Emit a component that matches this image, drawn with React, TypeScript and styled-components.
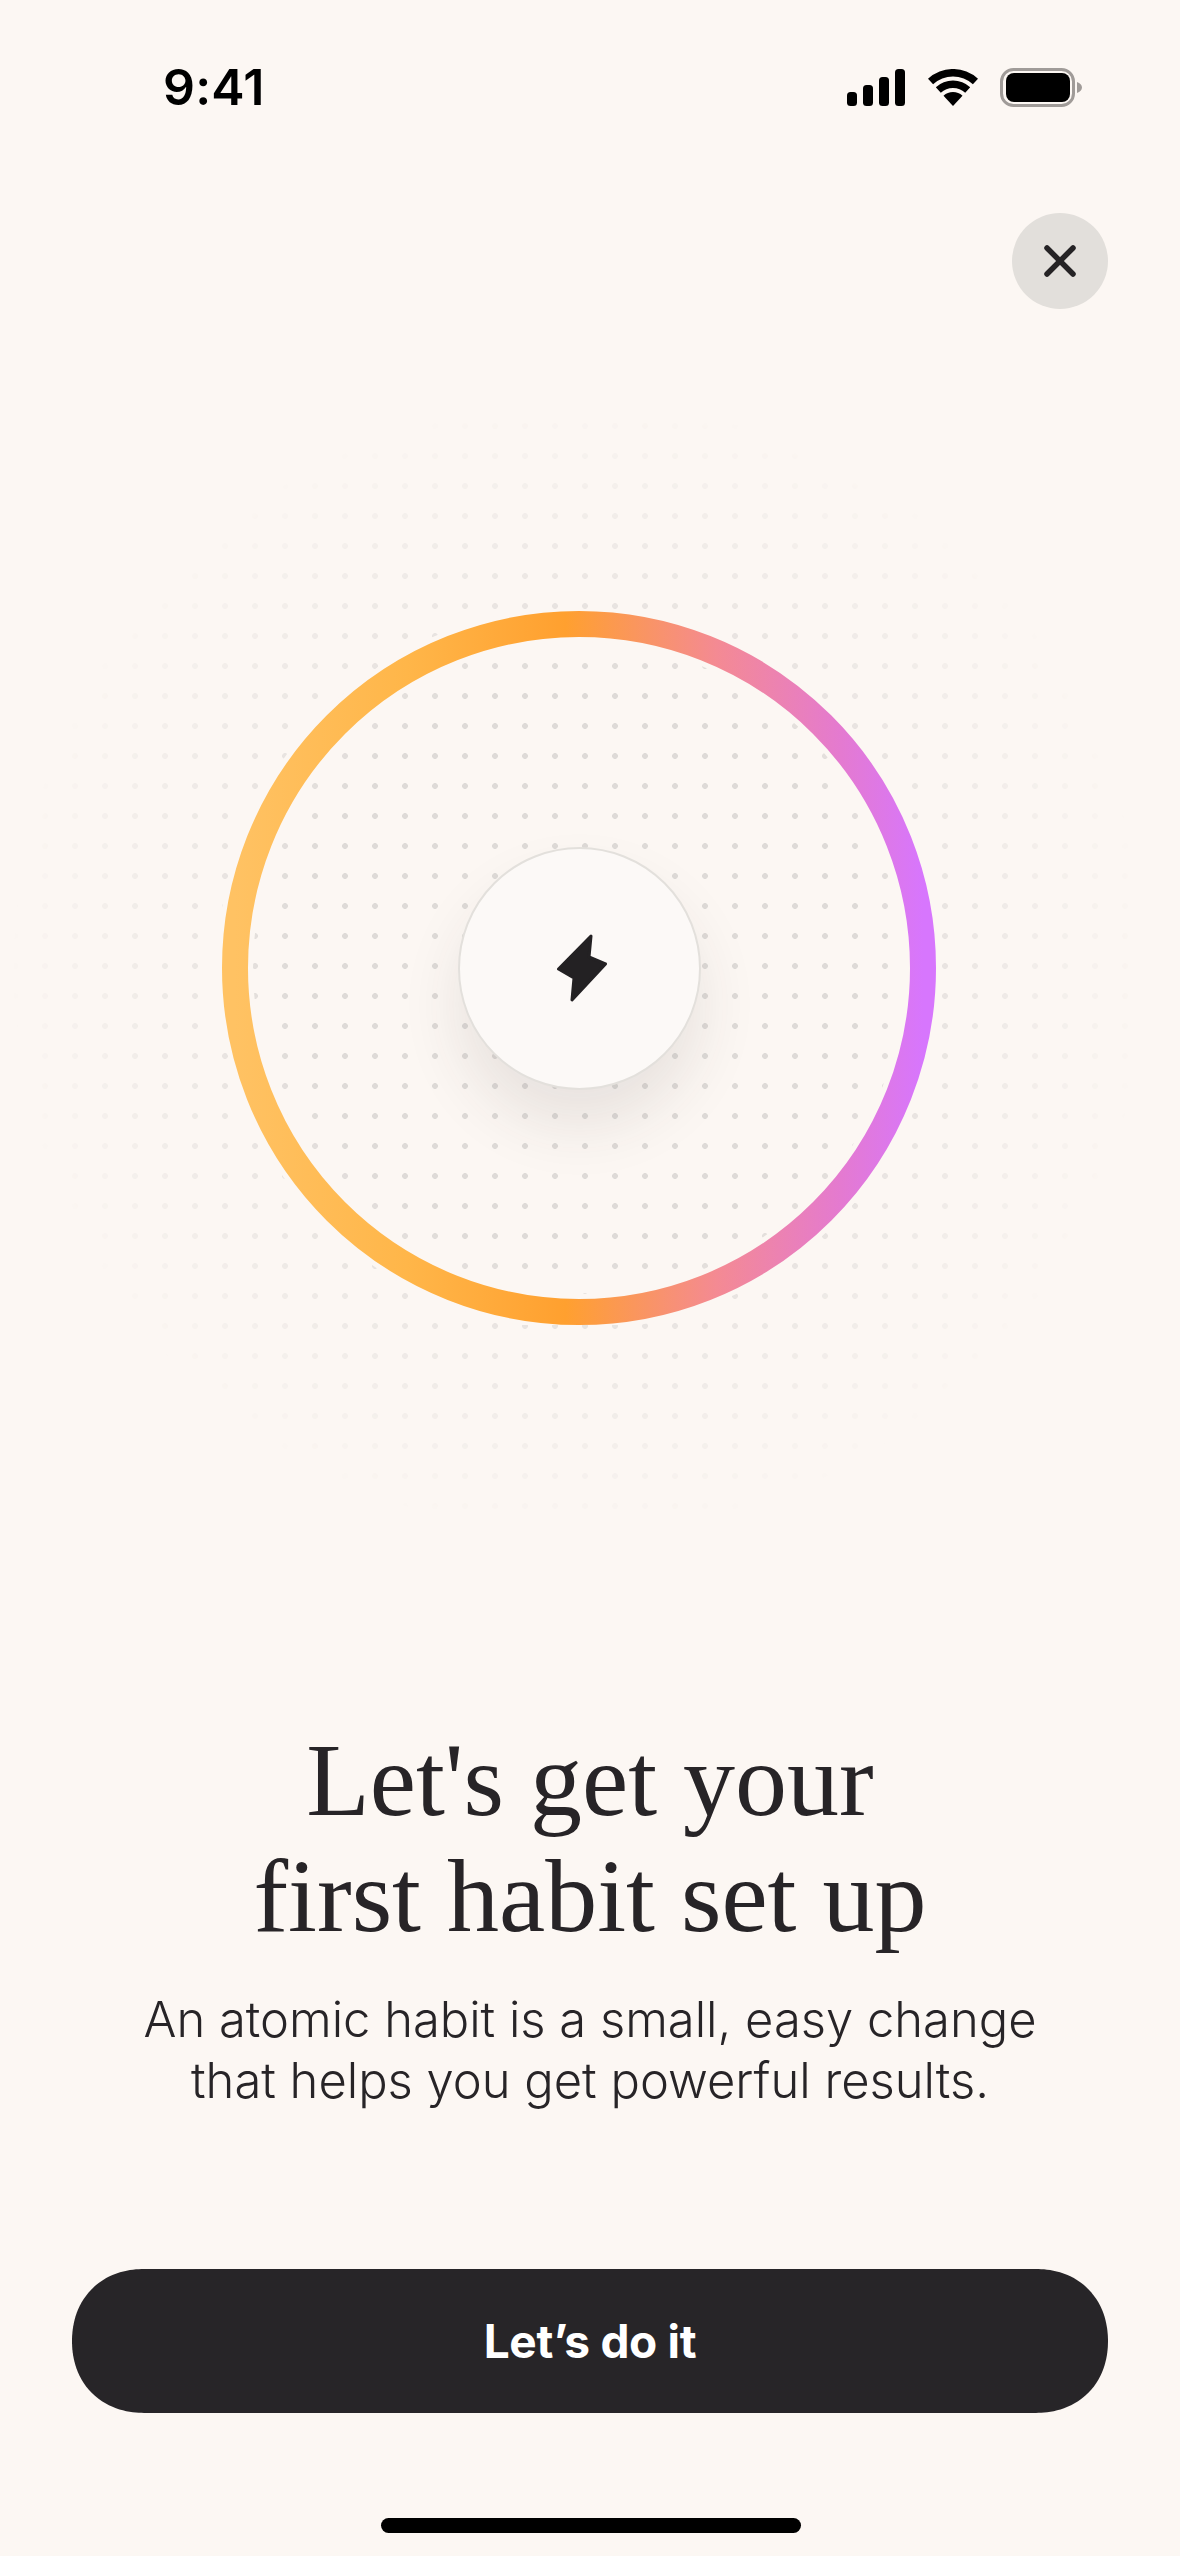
import React from "react";
import styled, { createGlobalStyle } from "styled-components";

const Global = createGlobalStyle`
  html, body { margin: 0; padding: 0; background: #fcf7f3; }
  * { box-sizing: border-box; }
`;

const Screen = styled.div`
  width: 1180px;
  height: 2556px;
  background: #fcf7f3;
  display: flex;
  flex-direction: column;
  overflow: hidden;
  font-family: Inter, "Liberation Sans", sans-serif;
  color: #272427;
`;

const StatusBar = styled.div`
  display: flex;
  justify-content: space-between;
  align-items: center;
  height: 39px;
  margin-top: 68px;
  padding: 0 98px 0 163px;
`;

const Time = styled.span`
  font-size: 50px;
  font-weight: 600;
  line-height: 39px;
  letter-spacing: 0.2px;
  color: #000;
`;

const StatusIcons = styled.div`
  display: flex;
  align-items: center;
  gap: 22.5px;
`;

const CloseRow = styled.div`
  display: flex;
  justify-content: flex-end;
  margin-top: 106px;
  padding-right: 72px;
`;

const CloseButton = styled.button`
  width: 96px;
  height: 96px;
  border: 0;
  padding: 0;
  border-radius: 50%;
  background: #e2dfdb;
  color: #252325;
  display: flex;
  align-items: center;
  justify-content: center;
`;

const Hero = styled.div`
  position: relative;
  width: 714px;
  height: 714px;
  margin: 302px 0 0 222px;
  display: flex;
  align-items: center;
  justify-content: center;
`;

const DotField = styled.div`
  position: absolute;
  left: -213px;
  top: -213px;
  width: 1140px;
  height: 1140px;
  background-image: radial-gradient(circle at center, #dedad7 2.6px, transparent 3.2px);
  background-size: 30px 30px;
  background-position: 21px 13px;
  -webkit-mask-image: radial-gradient(circle closest-side, #000 0%, #000 50%, rgba(0,0,0,.5) 70%, rgba(0,0,0,.2) 88%, transparent 100%);
  mask-image: radial-gradient(circle closest-side, #000 0%, #000 50%, rgba(0,0,0,.5) 70%, rgba(0,0,0,.2) 88%, transparent 100%);
`;

const RingArt = styled.svg`
  position: absolute;
  inset: 0;
  width: 714px;
  height: 714px;
`;

const Knob = styled.div`
  position: relative;
  width: 243px;
  height: 243px;
  border-radius: 50%;
  background: #fcf9f7;
  border: 2px solid #e3e0dc;
  box-shadow: 0 36px 60px rgba(60, 50, 45, 0.1);
  display: flex;
  align-items: center;
  justify-content: center;
`;

const Bolt = styled.svg`
  width: 50px;
  height: 68px;
  margin-left: 5px;
`;

const Copy = styled.div`
  margin-top: 397px;
  text-align: center;
`;

const Title = styled.h1`
  margin: 0;
  font-family: "Liberation Serif", serif;
  font-weight: 400;
  font-size: 104px;
  line-height: 116px;
  color: #272427;
`;

const Body = styled.p`
  margin: 35px 0 0;
  font-size: 48.9px;
  font-weight: 360;
  line-height: 61px;
  color: #272427;
`;

const Cta = styled.button`
  display: block;
  width: 1036px;
  height: 144px;
  margin: 158px 0 0 72px;
  border: 0;
  border-radius: 72px;
  corner-shape: superellipse(1.1);
  background: #272528;
  color: #fff;
  font-family: Inter, "Liberation Sans", sans-serif;
  font-size: 46px;
  font-weight: 700;
  letter-spacing: -0.3px;
`;

const HomeBar = styled.div`
  width: 420px;
  height: 15px;
  margin: 105px 0 0 381px;
  border-radius: 8px;
  background: #000;
`;

export default function App() {
  return (
    <Screen>
      <Global />
      <StatusBar>
        <Time>9:41</Time>
        <StatusIcons>
          <svg width="58" height="37" viewBox="0 0 58 37" fill="#000">
            <rect x="0" y="23" width="10" height="14" rx="3.5" />
            <rect x="16" y="16" width="10" height="21" rx="3.5" />
            <rect x="32" y="8" width="10" height="29" rx="3.5" />
            <rect x="48" y="0" width="10" height="37" rx="3.5" />
          </svg>
          <svg width="50" height="37" viewBox="0 0 50 37" fill="#000">
            <path d="M0 9.7 A37 37 0 0 1 50 9.7 L44.9 15.3 A29.5 29.5 0 0 0 5.1 15.3 Z" />
            <path d="M7.8 18.2 A25.5 25.5 0 0 1 42.2 18.2 L37.2 23.7 A18 18 0 0 0 12.8 23.7 Z" />
            <path d="M25 37 L15.5 26.7 A14 14 0 0 1 34.5 26.7 Z" />
          </svg>
          <svg width="82" height="39" viewBox="0 0 82 39" fill="none">
            <rect x="1.5" y="1.5" width="72" height="36" rx="12" stroke="#a09b98" strokeWidth="3" />
            <rect x="6" y="5" width="64" height="29" rx="8" fill="#000" />
            <path d="M77 14 C80 15 82 17 82 19.5 C82 22 80 24 77 25 Z" fill="#a09b98" />
          </svg>
        </StatusIcons>
      </StatusBar>

      <CloseRow>
        <CloseButton aria-label="Close">
          <svg width="32" height="32" viewBox="0 0 32 32" fill="none" stroke="currentColor" strokeWidth="5.5" strokeLinecap="round">
            <path d="M3 3 L29 29 M29 3 L3 29" />
          </svg>
        </CloseButton>
      </CloseRow>

      <Hero>
        <DotField />
        <RingArt viewBox="0 0 714 714">
          <defs>
            <linearGradient id="ringGrad" x1="0" y1="0" x2="1" y2="0">
              <stop offset="0" stopColor="#ffc263" />
              <stop offset="0.25" stopColor="#ffb649" />
              <stop offset="0.48" stopColor="#ffa02f" />
              <stop offset="0.7" stopColor="#f48a93" />
              <stop offset="0.88" stopColor="#e47ad0" />
              <stop offset="1" stopColor="#d776fd" />
            </linearGradient>
          </defs>
          <circle cx="357" cy="357" r="344" fill="none" stroke="#fcf7f3" strokeWidth="36" />
          <circle cx="357" cy="357" r="344" fill="none" stroke="url(#ringGrad)" strokeWidth="26" />
        </RingArt>
        <Knob>
          <Bolt viewBox="0 0 50 68" fill="#232123" stroke="#232123" strokeWidth="3" strokeLinejoin="round">
            <path d="M34 2 L32 23 L48.5 30 L15 66 L17 44 L1.5 35 Z" />
          </Bolt>
        </Knob>
      </Hero>

      <Copy>
        <Title>
          Let's get your
          <br />
          first habit set up
        </Title>
        <Body>
          An atomic habit is a small, easy change
          <br />
          that helps you get powerful results.
        </Body>
      </Copy>

      <Cta>Let’s do it</Cta>
      <HomeBar />
    </Screen>
  );
}
